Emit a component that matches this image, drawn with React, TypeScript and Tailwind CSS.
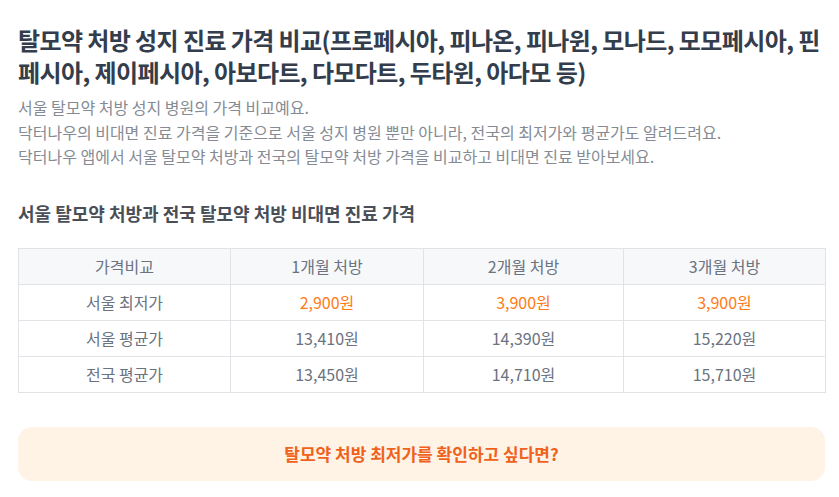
import React from "react";

const rows = [
  { label: "서울 최저가", v: ["2,900원", "3,900원", "3,900원"], hi: true },
  { label: "서울 평균가", v: ["13,410원", "14,390원", "15,220원"], hi: false },
  { label: "전국 평균가", v: ["13,450원", "14,710원", "15,710원"], hi: false },
];

export default function App() {
  return (
    <div
      className="w-[839px] h-[497px] bg-white pl-[18px] pr-[14px] pt-[24px]"
      style={{ fontFamily: '"Noto Sans CJK KR", "Noto Sans", sans-serif' }}
    >
      <h1 className="text-[24px] leading-[32px] font-bold text-[#333d4b] tracking-[-0.6px] mr-[-6px]">
        탈모약 처방 성지 진료 가격 비교(프로페시아, 피나온, 피나윈, 모나드, 모모페시아, 핀페시아, 제이페시아, 아보다트, 다모다트, 두타윈, 아다모 등)
      </h1>
      <div className="mt-[7px] text-[16px] leading-[24.5px] text-[#858b94]">
        <p>서울 탈모약 처방 성지 병원의 가격 비교예요.</p>
        <p>닥터나우의 비대면 진료 가격을 기준으로 서울 성지 병원 뿐만 아니라, 전국의 최저가와 평균가도 알려드려요.</p>
        <p>닥터나우 앱에서 서울 탈모약 처방과 전국의 탈모약 처방 가격을 비교하고 비대면 진료 받아보세요.</p>
      </div>
      <h2 className="mt-[32px] text-[18px] leading-[24px] font-bold text-[#4a4f57]">
        서울 탈모약 처방과 전국 탈모약 처방 비대면 진료 가격
      </h2>
      <table className="mt-[23px] w-[807px] border-collapse text-[16px] text-[#6b7280] text-center table-fixed">
        <colgroup>
          <col className="w-[212px]" />
          <col className="w-[193px]" />
          <col className="w-[200px]" />
          <col className="w-[202px]" />
        </colgroup>
        <thead>
          <tr className="bg-[#f7f8fa] h-[36px]">
            <th className="border border-[#e1e3e6] font-normal">가격비교</th>
            <th className="border border-[#e1e3e6] font-normal">1개월 처방</th>
            <th className="border border-[#e1e3e6] font-normal">2개월 처방</th>
            <th className="border border-[#e1e3e6] font-normal">3개월 처방</th>
          </tr>
        </thead>
        <tbody>
          {rows.map((r) => (
            <tr key={r.label} className="h-[36px]">
              <td className="border border-[#e1e3e6]">{r.label}</td>
              {r.v.map((x, i) => (
                <td
                  key={i}
                  className={
                    r.hi
                      ? "border border-[#e1e3e6] text-[#ff7b17]"
                      : "border border-[#e1e3e6] text-[#6b7280]"
                  }
                >
                  {x}
                </td>
              ))}
            </tr>
          ))}
        </tbody>
      </table>
      <div className="mt-[34px] w-[807px] h-[54px] rounded-[14px] bg-[#fff3e6] flex items-center justify-center">
        <span className="text-[17px] font-bold text-[#f0621b]">탈모약 처방 최저가를 확인하고 싶다면?</span>
      </div>
    </div>
  );
}
